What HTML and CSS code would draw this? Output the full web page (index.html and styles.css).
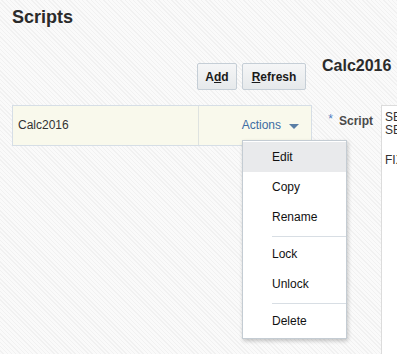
FILE: index.html
```html
<!DOCTYPE html>
<html>
<head>
<meta charset="utf-8">
<link rel="stylesheet" href="styles.css">
</head>
<body>
<div class="page">
  <h1 class="title">Scripts</h1>
  <div class="main">
    <div class="master">
      <div class="toolbar">
        <button class="btn">A<u>d</u>d</button>
        <button class="btn"><u>R</u>efresh</button>
      </div>
      <div class="row">
        <div class="cell name">Calc2016</div>
        <div class="cell actions">
          <span class="actions-label">Actions</span>
          <span class="caret"></span>
        </div>
        <div class="menu">
          <div class="item active">Edit</div>
          <div class="item">Copy</div>
          <div class="item">Rename</div>
          <div class="sep"></div>
          <div class="item">Lock</div>
          <div class="item">Unlock</div>
          <div class="sep"></div>
          <div class="item">Delete</div>
        </div>
      </div>
    </div>
    <div class="detail">
      <h2 class="detail-title">Calc2016</h2>
      <div class="field">
        <label class="label"><span class="req">*</span>Script</label>
        <div class="editor">
          <div class="line">SET UPDATECALC OFF;</div>
          <div class="line">SET AGGMISSG ON;</div>
          <div class="line gap">FIX("Actual", "FY16")</div>
        </div>
      </div>
    </div>
  </div>
</div>
</body>
</html>
```

FILE: styles.css
```css
html, body {
  margin: 0;
  padding: 0;
  overflow: hidden;
  height: 100%;
}
body {
  font-family: "Liberation Sans", Arial, sans-serif;
  color: #333;
  background-color: #f7f7f7;
  background-image: repeating-linear-gradient(45deg, #fafafa 0px, #fafafa 2px, #f1f1f1 2px, #f1f1f1 3px);
}
.page {
  width: 397px;
  height: 354px;
  overflow: hidden;
  padding-left: 12px;
  box-sizing: border-box;
}
.title {
  margin: 0;
  padding-top: 7px;
  font-size: 18px;
  line-height: 20px;
  font-weight: bold;
  color: #2b2b2b;
}
.main {
  display: flex;
}
.master {
  width: 300px;
  flex: none;
}
.toolbar {
  display: flex;
  justify-content: flex-end;
  gap: 5px;
  padding-right: 6px;
  margin-top: 36px;
}
.btn {
  height: 27px;
  padding: 0;
  font-family: "Liberation Sans", Arial, sans-serif;
  font-size: 12px;
  font-weight: bold;
  color: #1a1a1a;
  background: linear-gradient(#f5f6f7, #e6e9eb);
  border: 1px solid #c5ced6;
  border-radius: 2px;
  box-sizing: border-box;
}
.btn:first-child { width: 40px; }
.btn:last-child { width: 64px; }
.row {
  position: relative;
  margin-top: 15px;
  display: flex;
  height: 41px;
  box-sizing: border-box;
  border: 1px solid #d6dee6;
  background: #f9f9ec;
}
.cell {
  line-height: 39px;
  font-size: 12px;
}
.name {
  width: 186px;
  padding-left: 5px;
  box-sizing: border-box;
  border-right: 1px solid #dfe3e0;
  color: #333;
}
.actions {
  flex: 1;
  display: flex;
  justify-content: flex-end;
  align-items: center;
  gap: 8px;
  padding-right: 12px;
}
.actions-label {
  color: #3d6ca3;
}
.caret {
  width: 0;
  height: 0;
  border-left: 5px solid transparent;
  border-right: 5px solid transparent;
  border-top: 5px solid #5a7ea5;
  margin-top: 1px;
}
.menu {
  position: absolute;
  left: 229px;
  top: 34px;
  width: 103px;
  padding: 1px 0 2px;
  background: #fff;
  border: 1px solid #c4ccd3;
  box-shadow: 1px 2px 4px rgba(0, 0, 0, 0.22);
  z-index: 2;
}
.item {
  height: 30px;
  line-height: 30px;
  padding-left: 29px;
  font-size: 12px;
  color: #111;
}
.item.active {
  background: #e9eaec;
}
.sep {
  height: 1px;
  margin: 4px 0 2px 29px;
  background: #d8dee4;
}
.detail {
  flex: 1;
  min-width: 0;
  margin-left: 10px;
  overflow: hidden;
}
.detail-title {
  margin: 29px 0 0;
  font-size: 16px;
  line-height: 20px;
  font-weight: bold;
  color: #2b2b2b;
  white-space: nowrap;
}
.field {
  display: flex;
  margin-top: 29px;
}
.label {
  width: 59px;
  flex: none;
  box-sizing: border-box;
  padding: 7px 8px 0 0;
  text-align: right;
  font-size: 12px;
  line-height: 14px;
  font-weight: bold;
  color: #4a4a4a;
}
.req {
  color: #4f7cc0;
  font-weight: normal;
  margin-right: 6px;
  vertical-align: 2px;
}
.editor {
  flex: none;
  width: 300px;
  height: 260px;
  box-sizing: border-box;
  border: 1px solid #dcdcdc;
  background: #fff;
  padding: 5px 0 0 3px;
  font-size: 12px;
  line-height: 13px;
  color: #333;
  white-space: nowrap;
}
.line.gap {
  margin-top: 17px;
}
```
